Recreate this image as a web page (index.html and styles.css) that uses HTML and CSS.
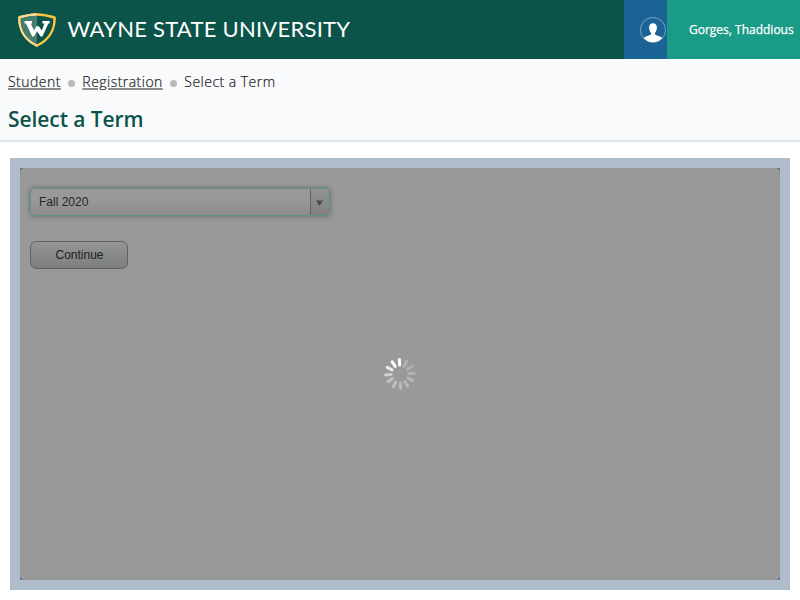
FILE: index.html
```
<!DOCTYPE html>
<html lang="en">
<head>
<meta charset="utf-8">
<title>Select a Term</title>
<link rel="stylesheet" href="styles.css">
</head>
<body>
<header class="topbar">
  <svg class="brand" width="360" height="59" viewBox="0 0 360 59">
    <path d="M18.2 16.8Q28 13.2 37 13.2Q46 13.2 55.8 16.8Q56.5 37.5 37 47Q17.5 37.5 18.2 16.8Z" fill="#fdc63b"/>
    <path d="M18.2 16.8Q28 13.2 37 13.2V47Q17.5 37.5 18.2 16.8Z" fill="#fddc92"/>
    <path d="M20.6 18.4Q29 15.7 37 15.7Q45 15.7 53.4 18.4Q53.6 35.8 37 44.2Q20.4 35.8 20.6 18.4Z" fill="#0c5449"/>
    <path d="M20.6 18.4Q29 15.7 37 15.7V44.2Q20.4 35.8 20.6 18.4Z" fill="#477d70"/>
    <path d="M24.6 21H32V23.6H30.8L34 30.6L36.4 26.2H38.8L41.8 30.6L44.4 23.6H42.4V21H49.6V23.6H48.4L42.4 36.6H40.6L37 31.2L34 36.6H32.2L26 23.6H24.6Z" fill="#fff"/>
    <text class="wordmark" x="67.5" y="36.6" textLength="282.5" lengthAdjust="spacing">WAYNE STATE UNIVERSITY</text>
  </svg>
  <div class="account">
    <svg width="26" height="26" viewBox="0 0 26 26">
      <circle cx="13" cy="13" r="12.5" fill="none" stroke="#8db1d0" stroke-width=".8"/>
      <path d="M13 6.2C10.5 6.2 9 8 9.1 10.7C9.2 13.2 10 14.7 11 15.9V17.6C9.5 18.6 5.5 19.1 3.7 21.1A12.4 12.4 0 0 0 22.3 21.1C20.5 19.1 16.5 18.6 15 17.6V15.9C16 14.7 16.8 13.2 16.9 10.7C17 8 15.5 6.2 13 6.2Z" fill="#fff"/>
    </svg>
  </div>
  <div class="user">Gorges, Thaddious</div>
</header>
<section class="heading">
  <nav class="crumbs">
    <a class="crumb-link">Student</a><i class="dot"></i><a class="crumb-link">Registration</a><i class="dot"></i><span>Select a Term</span>
  </nav>
  <h1 class="title">Select a Term</h1>
</section>
<main class="frame">
  <div class="panel">
    <div class="select">
      <span class="value">Fall 2020</span>
      <span class="arrow"><svg width="7" height="6" viewBox="0 0 7 6"><path d="M0 .5H7L3.5 5.8Z" fill="#494949"/></svg></span>
    </div>
    <button class="continue">Continue</button>
    <svg class="spinner" width="34" height="34" viewBox="-17 -17 34 34">
      <g transform="rotate(-2.5)" stroke-width="3" stroke-linecap="round">
        <path d="M0-9V-14.4" stroke="#fff"/>
        <path d="M0-9V-14.4" stroke="#b2b2b2" transform="rotate(30)"/>
        <path d="M0-9V-14.4" stroke="#b2b2b2" transform="rotate(60)"/>
        <path d="M0-9V-14.4" stroke="#b4b4b4" transform="rotate(90)"/>
        <path d="M0-9V-14.4" stroke="#b6b6b6" transform="rotate(120)"/>
        <path d="M0-9V-14.4" stroke="#b8b8b8" transform="rotate(150)"/>
        <path d="M0-9V-14.4" stroke="#bababa" transform="rotate(180)"/>
        <path d="M0-9V-14.4" stroke="#bebebe" transform="rotate(210)"/>
        <path d="M0-9V-14.4" stroke="#c2c2c2" transform="rotate(240)"/>
        <path d="M0-9V-14.4" stroke="#d0d0d0" transform="rotate(270)"/>
        <path d="M0-9V-14.4" stroke="#ededed" transform="rotate(300)"/>
        <path d="M0-9V-14.4" stroke="#fff" transform="rotate(330)"/>
      </g>
    </svg>
  </div>
</main>
</body>
</html>
```
FILE: styles.css
```
* { box-sizing: border-box; }
body {
  margin: 0;
  height: 600px;
  overflow: hidden;
  background: #fff;
  font-family: "Open Sans", sans-serif;
}
.topbar {
  display: flex;
  height: 59px;
  background: #0c5449;
}
.brand { display: block; margin-right: auto; }
.wordmark {
  font-family: Lato, sans-serif;
  font-size: 22px;
  fill: #fff;
}
.account {
  width: 43px;
  padding: 17px 0 0 16px;
  background: #1b6395;
}
.account svg { display: block; }
.user {
  width: 133px;
  padding-left: 22px;
  background: #1a9b87;
  color: #fff;
  font-size: 12px;
  line-height: 59px;
  white-space: nowrap;
  -webkit-text-stroke: .25px #fff;
}
.heading {
  height: 83px;
  margin-bottom: 16px;
  padding: 11px 8px 0;
  border-top: 2px solid #fcfdfe;
  border-bottom: 2px solid #dee5e9;
  background: #f9fafc;
}
.crumbs {
  display: flex;
  height: 19px;
  color: #1c1c24;
  font-size: 14px;
  font-weight: 300;
  line-height: 19px;
  letter-spacing: .47px;
  white-space: nowrap;
  -webkit-text-stroke: .2px #1c1c24;
}
.crumb-link {
  text-decoration: underline #8c8c8e 2px;
  text-underline-offset: 1px;
}
.dot {
  width: 7px;
  height: 7px;
  margin: 8px 7.5px 0 7px;
  border-radius: 50%;
  background: #b9b9b9;
}
.title {
  margin: 14px 0 0;
  color: #0c5449;
  font-size: 21px;
  font-weight: 600;
  line-height: 28px;
  letter-spacing: -.07px;
}
.frame {
  width: 780px;
  height: 432px;
  margin: 0 auto;
  border: 10px solid #aebccb;
  background: #67747f;
}
.panel {
  position: relative;
  height: 412px;
  padding: 20px 10px;
  border-radius: 5px;
  background: #999;
  font-family: "Liberation Sans", Arial, sans-serif;
}
.select {
  display: flex;
  width: 300px;
  height: 28px;
  border: 1px solid #5d918b;
  border-radius: 4px;
  background: linear-gradient(#999 40%, #8c8c8c);
  box-shadow: 0 0 5px #666;
  color: #262626;
  font-size: 12px;
  line-height: 26px;
}
.value { flex: 1; padding-left: 8px; }
.arrow {
  width: 19px;
  padding: 11px 0 0 5px;
  border-left: 1px solid #626262;
  background: linear-gradient(#929292, #818181);
  border-radius: 0 3px 3px 0;
}
.arrow svg { display: block; }
.continue {
  display: block;
  width: 98px;
  height: 28px;
  margin-top: 25px;
  padding: 0 0 0 1px;
  border: 1px solid #626464;
  border-radius: 6px;
  background: linear-gradient(#949595, #7d7f7e);
  color: #202020;
  font: 12px "Liberation Sans", Arial, sans-serif;
}
.spinner {
  position: absolute;
  left: 363px;
  top: 189px;
}
```
